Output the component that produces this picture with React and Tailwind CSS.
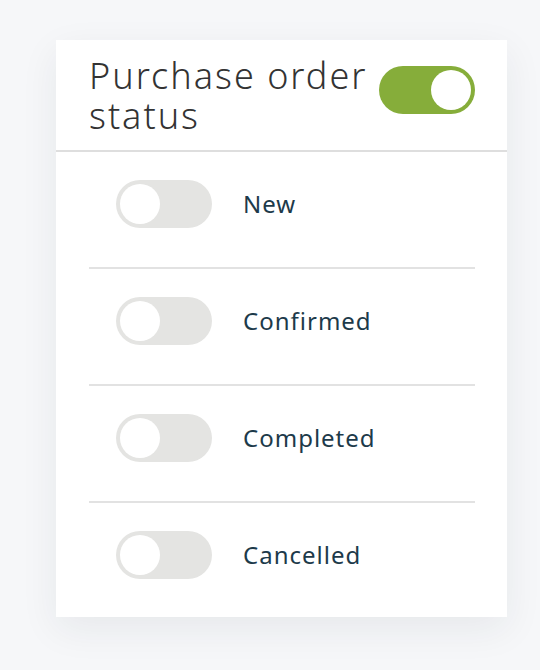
import React, { useState } from "react";

const font = { fontFamily: "'Noto Sans', Lato, sans-serif" };

function Toggle({ on, onChange }) {
  return (
    <button
      type="button"
      onClick={onChange}
      className={`relative h-12 w-24 shrink-0 rounded-full transition-colors ${on ? "bg-[#86ad3a]" : "bg-[#e4e4e2]"}`}
    >
      <span
        className={`absolute top-1 h-10 w-10 rounded-full bg-white transition-all ${on ? "left-[52px]" : "left-1"}`}
      />
    </button>
  );
}

export default function App() {
  const [all, setAll] = useState(true);
  const [items, setItems] = useState([
    { label: "New", on: false },
    { label: "Confirmed", on: false },
    { label: "Completed", on: false },
    { label: "Cancelled", on: false },
  ]);

  const flip = (i) => setItems(items.map((it, j) => (j === i ? { ...it, on: !it.on } : it)));

  return (
    <div className="min-h-[670px] w-full bg-[#f6f7f9] pl-14 pt-10" style={font}>
      <div className="w-[451px] bg-white shadow-[0_12px_36px_rgba(30,40,60,0.07)]">
        {/* header */}
        <div className="flex items-start justify-between border-b-2 border-[#dedede] pb-[14px] pl-[33px] pr-8 pt-4">
          <h2 className="text-4xl font-light tracking-[2px] text-[#333333]">
            Purchase order
            <br />
            status
          </h2>
          <div className="mt-[10px]">
            <Toggle on={all} onChange={() => setAll(!all)} />
          </div>
        </div>

        {/* rows */}
        <div className="px-8 pl-[33px]">
          {items.map((it, i) => (
            <div
              key={it.label}
              className={`flex items-center gap-[31px] pl-[27px] pt-7 ${i < items.length - 1 ? "border-b-2 border-[#e2e2e2] pb-[39px]" : "pb-[38px]"}`}
            >
              <Toggle on={it.on} onChange={() => flip(i)} />
              <span className="text-2xl tracking-[1px] text-[#1d3a4a]">{it.label}</span>
            </div>
          ))}
        </div>
      </div>
    </div>
  );
}
